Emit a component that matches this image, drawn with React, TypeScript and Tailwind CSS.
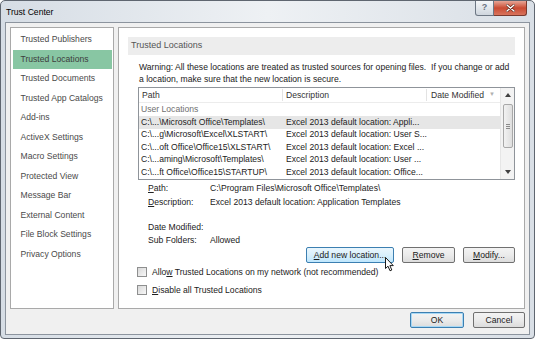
import React from 'react';

const navItems = [
  'Trusted Publishers',
  'Trusted Locations',
  'Trusted Documents',
  'Trusted App Catalogs',
  'Add-ins',
  'ActiveX Settings',
  'Macro Settings',
  'Protected View',
  'Message Bar',
  'External Content',
  'File Block Settings',
  'Privacy Options',
];

const locations = [
  { path: 'C:\\...\\Microsoft Office\\Templates\\', desc: 'Excel 2013 default location: Appli...' },
  { path: 'C:\\...g\\Microsoft\\Excel\\XLSTART\\', desc: 'Excel 2013 default location: User S...' },
  { path: 'C:\\...oft Office\\Office15\\XLSTART\\', desc: 'Excel 2013 default location: Excel ...' },
  { path: 'C:\\...aming\\Microsoft\\Templates\\', desc: 'Excel 2013 default location: User ...' },
  { path: 'C:\\...ft Office\\Office15\\STARTUP\\', desc: 'Excel 2013 default location: Office...' },
];

const btn =
  'flex h-[16px] items-center justify-center rounded-[2px] border border-[#707070] bg-gradient-to-b from-[#f3f3f3] via-[#ebebeb] to-[#dcdcdc] text-[#1a1a1a]';

const Checkbox: React.FC<{ children: React.ReactNode }> = ({ children }) => (
  <div className="flex h-[18px] items-center">
    <span className="ml-[-1px] h-[10px] w-[10px] border border-[#8e8f8f] bg-gradient-to-br from-[#d8d8d8] to-[#f8f8f8]" />
    <span className="ml-[5px]">{children}</span>
  </div>
);

export default function App() {
  return (
    <div className="h-[339px] w-[535px] overflow-hidden bg-white">
      <div className="flex h-full flex-col rounded-t-[5px] rounded-b-[4px] border border-[#5f6670] bg-gradient-to-r from-[#d6dde5] via-[#eef1f4] to-[#d9dfe6] font-['Liberation_Sans',Arial,sans-serif] text-[8.6px] text-[#222]">
        {/* Title bar */}
        <div className="flex h-[21px] shrink-0 items-start">
          <span className="ml-[5px] mt-[5px] text-[8.6px] text-black">Trust Center</span>
          <div className="ml-auto mr-[7px] flex">
            <div className="flex h-[15px] w-[19px] items-center justify-center rounded-bl-[3px] border border-t-0 border-[#6d7784] bg-gradient-to-b from-[#f4f6f8] to-[#cfd6de] text-[9px] font-bold text-[#6a7280]">
              ?
            </div>
            <div className="flex h-[15px] w-[33px] items-center justify-center rounded-br-[3px] border border-l-0 border-t-0 border-[#7a3a2e] bg-gradient-to-b from-[#e6a596] via-[#c94a32] to-[#d8735c]">
              <svg width="9" height="8" viewBox="0 0 9 8">
                <path d="M1 1 L8 7 M8 1 L1 7" stroke="#5a2418" strokeWidth="2.6" strokeLinecap="round" />
                <path d="M1 1 L8 7 M8 1 L1 7" stroke="#ffffff" strokeWidth="1.4" strokeLinecap="round" />
              </svg>
            </div>
          </div>
        </div>

        {/* Client area */}
        <div className="mx-[4px] mb-[4px] flex flex-1 flex-col border border-[#8c949e] bg-[#f0f0f0]">
          <div className="flex flex-1 gap-[4px] px-[4px] pt-[4px]">
            {/* Left navigation */}
            <nav className="w-[104px] border border-[#a9a9a9] bg-white pt-[2px] text-[#4a4a4a]">
              {navItems.map((item) => (
                <div
                  key={item}
                  className={`mx-[1.5px] flex h-[19.5px] items-center pl-[8px] ${
                    item === 'Trusted Locations' ? 'bg-[#88c6a3] text-[#3d3d3d]' : ''
                  }`}
                >
                  {item}
                </div>
              ))}
            </nav>

            {/* Right content */}
            <section className="relative flex-1 border border-[#a9a9a9] bg-white p-[9px]">
              <div className="flex h-[18px] items-center bg-[#ededed] pl-[3px] text-[9px] text-[#555]">
                Trusted Locations
              </div>

              <div className="pl-[10px]">
                <p className="mt-[6px] pl-[1px] leading-[12px]">
                  Warning: All these locations are treated as trusted sources for opening files.&nbsp; If you change or add
                  <br />
                  a location, make sure that the new location is secure.
                </p>

                {/* Locations table */}
                <div className="mt-[2px] flex h-[93px] border border-[#8f949a]">
                  <div className="flex-1 overflow-hidden">
                    <div className="flex h-[15px] items-center border-b border-[#ececec] text-[#333]">
                      <div className="w-[144px] border-r border-[#e3e3e3] pl-[3px]">Path</div>
                      <div className="w-[144px] border-r border-[#e3e3e3] pl-[3px]">Description</div>
                      <div className="flex flex-1 items-center pl-[4px]">
                        Date Modified
                        <span className="ml-[5px] text-[6px] text-[#b0b0b0]">▼</span>
                      </div>
                    </div>
                    <div className="flex h-[13px] items-center pl-[2px] text-[#707070]">User Locations</div>
                    {locations.map((loc, i) => (
                      <div
                        key={loc.path}
                        className={`flex h-[12.5px] items-center ${i === 0 ? 'bg-[#e6e6e6]' : ''}`}
                      >
                        <div className="w-[144px] pl-[2px] whitespace-nowrap">{loc.path}</div>
                        <div className="pl-[3px] whitespace-nowrap">{loc.desc}</div>
                      </div>
                    ))}
                  </div>
                  {/* Scrollbar */}
                  <div className="flex w-[14px] flex-col items-center border-l border-[#e6e6e6] bg-[#f3f3f3]">
                    <svg className="mt-[5px]" width="6" height="4" viewBox="0 0 6 4">
                      <path d="M0 4 L3 0 L6 4 Z" fill="#404040" />
                    </svg>
                    <div className="mt-[7px] flex h-[44px] w-[10px] items-center justify-center rounded-[2px] border border-[#a8a8a8] bg-gradient-to-r from-[#f2f2f2] to-[#dedede]">
                      <div className="flex flex-col gap-[1px]">
                        <span className="h-px w-[4px] bg-[#8a8a8a]" />
                        <span className="h-px w-[4px] bg-[#8a8a8a]" />
                        <span className="h-px w-[4px] bg-[#8a8a8a]" />
                      </div>
                    </div>
                    <svg className="mt-auto mb-[5px]" width="6" height="4" viewBox="0 0 6 4">
                      <path d="M0 0 L3 4 L6 0 Z" fill="#404040" />
                    </svg>
                  </div>
                </div>

                {/* Details */}
                <div className="mt-[1px] grid grid-cols-[62px_1fr] grid-rows-[14px_14px_12px_13px_13px] items-center pl-[10px]">
                  <span>
                    <span className="underline">P</span>ath:
                  </span>
                  <span>C:\Program Files\Microsoft Office\Templates\</span>
                  <span>
                    <span className="underline">D</span>escription:
                  </span>
                  <span>Excel 2013 default location: Application Templates</span>
                  <span />
                  <span />
                  <span>Date Modified:</span>
                  <span />
                  <span>Sub Folders:</span>
                  <span>Allowed</span>
                </div>

                {/* Action buttons */}
                <div className="flex justify-end gap-[8px]">
                  <div className="flex h-[16px] w-[88px] items-center justify-center rounded-[2px] border border-[#3c7fb1] bg-gradient-to-b from-[#eaf6fd] via-[#d9f0fc] to-[#bee6fd] text-[#1a1a1a]">
                    <span>
                      <span className="underline">A</span>dd new location...
                    </span>
                  </div>
                  <div className={`${btn} w-[53px]`}>
                    <span>
                      <span className="underline">R</span>emove
                    </span>
                  </div>
                  <div className={`${btn} w-[52px]`}>
                    <span>
                      <span className="underline">M</span>odify...
                    </span>
                  </div>
                </div>

                {/* Options */}
                <Checkbox>
                  Allo<span className="underline">w</span> Trusted Locations on my network (not recommended)
                </Checkbox>
                <Checkbox>
                  <span className="underline">D</span>isable all Trusted Locations
                </Checkbox>
              </div>

              {/* Mouse pointer */}
              <svg className="absolute left-[266px] top-[229px]" width="10" height="15" viewBox="0 0 10 15">
                <path
                  d="M0.5 0.5 L0.5 11.5 L3 9.2 L5 13.8 L6.8 13 L4.9 8.6 L8.3 8.6 Z"
                  fill="#ffffff"
                  stroke="#1a1a1a"
                  strokeWidth="1"
                  strokeLinejoin="round"
                />
              </svg>
            </section>
          </div>

          {/* Footer */}
          <div className="flex h-[25px] shrink-0 items-start justify-end gap-[9px] pr-[4px] pt-[3px]">
            <div className="flex h-[16px] w-[54px] items-center justify-center rounded-[2px] border border-[#3c7fb1] bg-gradient-to-b from-[#f3f3f3] via-[#ebebeb] to-[#dcdcdc] text-[#1a1a1a] shadow-[inset_0_0_0_1px_#a7d8f5]">
              OK
            </div>
            <div className={`${btn} w-[52px]`}>Cancel</div>
          </div>
        </div>
      </div>
    </div>
  );
}
